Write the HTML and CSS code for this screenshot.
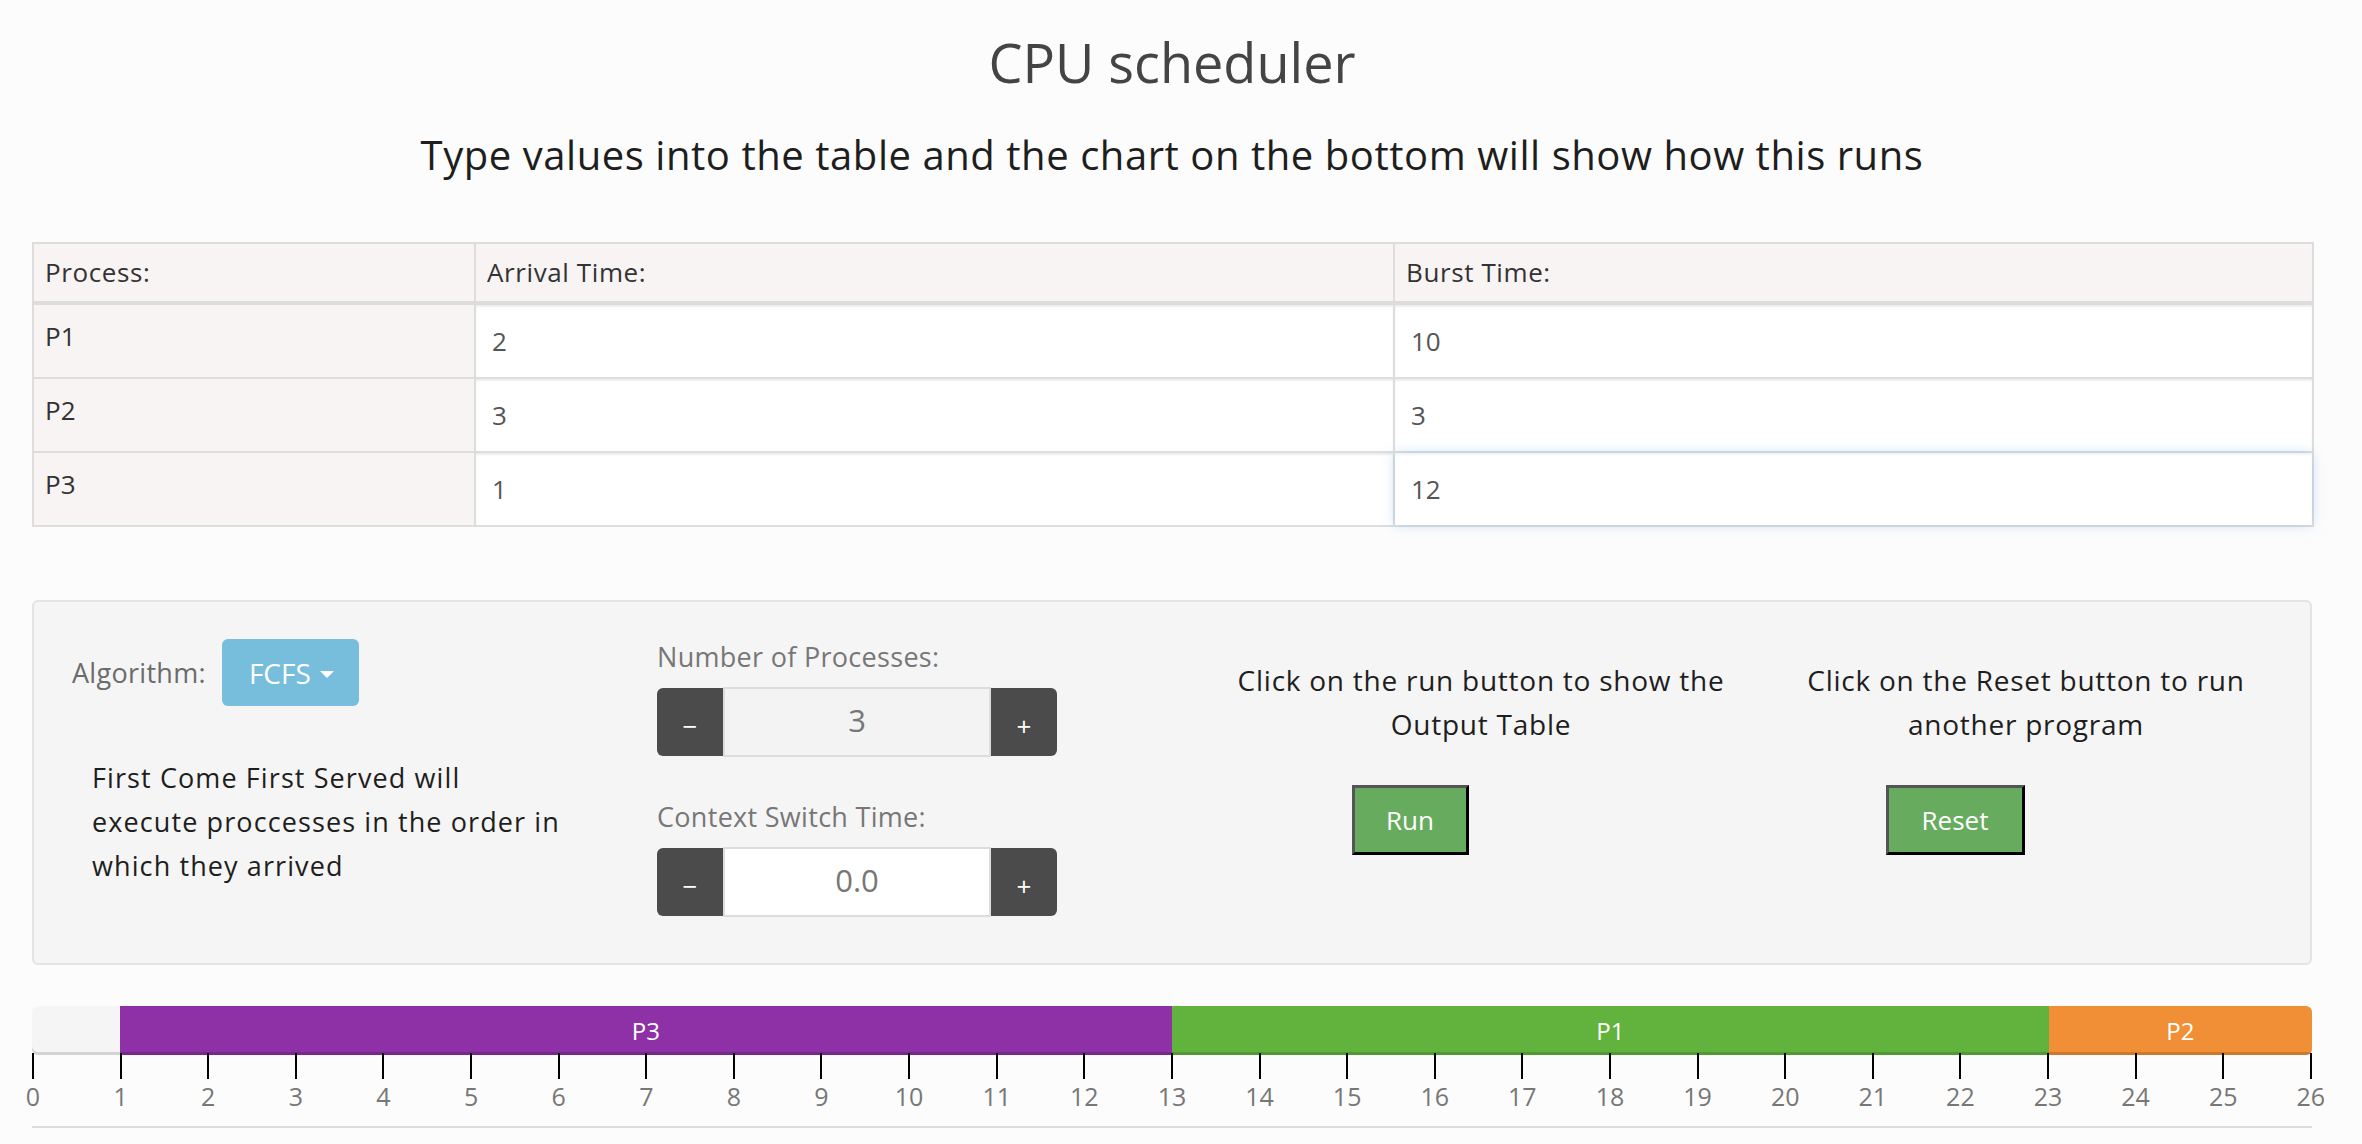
FILE: index.html
```html
<!DOCTYPE html>
<html lang="en">
<head>
<meta charset="utf-8">
<title>CPU scheduler</title>
<link rel="stylesheet" href="styles.css">
</head>
<body>
<h1 class="title">CPU scheduler</h1>
<h3 class="subtitle">Type values into the table and the chart on the bottom will show how this runs</h3>

<table class="proc-table">
  <colgroup><col class="col-proc"><col class="col-arr"><col class="col-burst"></colgroup>
  <thead>
    <tr><th>Process:</th><th>Arrival Time:</th><th>Burst Time:</th></tr>
  </thead>
  <tbody>
    <tr><td class="pname">P1</td><td class="cell"><input class="cell-input" value="2"></td><td class="cell"><input class="cell-input" value="10"></td></tr>
    <tr><td class="pname">P2</td><td class="cell"><input class="cell-input" value="3"></td><td class="cell"><input class="cell-input" value="3"></td></tr>
    <tr><td class="pname">P3</td><td class="cell"><input class="cell-input" value="1"></td><td class="cell"><input class="cell-input focused" value="12"></td></tr>
  </tbody>
</table>

<div class="panel">
  <div class="col col-algo">
    <div class="algo-row">
      <span class="label algo-label">Algorithm:</span>
      <button class="btn-algo">FCFS<span class="caret"></span></button>
    </div>
    <p class="algo-desc">First Come First Served will<br>execute proccesses in the order in<br>which they arrived</p>
  </div>
  <div class="col col-spin">
    <div class="label spin-label">Number of Processes:</div>
    <div class="spinner">
      <button class="spin-btn spin-minus">&#8722;</button>
      <input class="spin-input readonly" value="3">
      <button class="spin-btn spin-plus">+</button>
    </div>
    <div class="label spin-label second">Context Switch Time:</div>
    <div class="spinner">
      <button class="spin-btn spin-minus">&#8722;</button>
      <input class="spin-input" value="0.0">
      <button class="spin-btn spin-plus">+</button>
    </div>
  </div>
  <div class="col col-action">
    <p class="action-text">Click on the run button to show the<br>Output Table</p>
    <div class="action-btn-wrap"><button class="btn-green btn-run">Run</button></div>
  </div>
  <div class="col col-action">
    <p class="action-text">Click on the Reset button to run<br>another program</p>
    <div class="action-btn-wrap"><button class="btn-green btn-reset">Reset</button></div>
  </div>
</div>

<div class="timeline">
  <div class="bar">
    <div class="seg seg-idle" style="width: 3.846%"></div>
    <div class="seg seg-p3" style="width: 46.154%">P3</div>
    <div class="seg seg-p1" style="width: 38.462%">P1</div>
    <div class="seg seg-p2" style="width: 11.538%">P2</div>
  </div>
  <div class="ticks">
    <span class="tick"></span><span class="tick"></span><span class="tick"></span><span class="tick"></span><span class="tick"></span><span class="tick"></span><span class="tick"></span><span class="tick"></span><span class="tick"></span><span class="tick"></span><span class="tick"></span><span class="tick"></span><span class="tick"></span><span class="tick"></span><span class="tick"></span><span class="tick"></span><span class="tick"></span><span class="tick"></span><span class="tick"></span><span class="tick"></span><span class="tick"></span><span class="tick"></span><span class="tick"></span><span class="tick"></span><span class="tick"></span><span class="tick"></span><span class="tick"></span>
  </div>
  <div class="nums">
    <span class="num"><span>0</span></span><span class="num"><span>1</span></span><span class="num"><span>2</span></span><span class="num"><span>3</span></span><span class="num"><span>4</span></span><span class="num"><span>5</span></span><span class="num"><span>6</span></span><span class="num"><span>7</span></span><span class="num"><span>8</span></span><span class="num"><span>9</span></span><span class="num"><span>10</span></span><span class="num"><span>11</span></span><span class="num"><span>12</span></span><span class="num"><span>13</span></span><span class="num"><span>14</span></span><span class="num"><span>15</span></span><span class="num"><span>16</span></span><span class="num"><span>17</span></span><span class="num"><span>18</span></span><span class="num"><span>19</span></span><span class="num"><span>20</span></span><span class="num"><span>21</span></span><span class="num"><span>22</span></span><span class="num"><span>23</span></span><span class="num"><span>24</span></span><span class="num"><span>25</span></span><span class="num"><span>26</span></span>
  </div>
  <div class="baseline"></div>
</div>
</body>
</html>
```

FILE: styles.css
```css
* { box-sizing: border-box; }

html, body {
  margin: 0;
  background: #fcfcfc;
}

body {
  padding: 0 50px 0 32px;
  font-family: "Open Sans", "Noto Sans", "Liberation Sans", sans-serif;
  color: #333;
  width: 2362px;
  overflow: hidden;
}

.title {
  margin: 33px 0 0;
  font-size: 54px;
  line-height: 1.1;
  font-weight: 400;
  color: #444;
  text-align: center;
}

.subtitle {
  margin: 41px 0 0;
  font-size: 40px;
  line-height: 1.1;
  font-weight: 400;
  letter-spacing: 0.55px;
  color: #1e1e1e;
  text-align: center;
}

/* ---------- process table ---------- */
.proc-table {
  margin-top: 65px;
  width: 2280px;
  border-spacing: 0;
  border-top: 2px solid #ddd;
  border-left: 2px solid #ddd;
  table-layout: fixed;
}
.col-proc { width: 442px; }
.col-arr { width: 919px; }
.col-burst { width: 919px; }

.proc-table th,
.proc-table td {
  border-right: 2px solid #ddd;
  border-bottom: 2px solid #ddd;
  font-size: 26px;
  color: #333;
}

.proc-table th {
  text-align: left;
  font-weight: 400;
  line-height: 57px;
  padding: 0 11px;
  letter-spacing: 0.6px;
  background: #f9f4f4;
  border-bottom: 4px solid #dcdcdc;
}

.pname {
  background: #f9f4f4;
  vertical-align: top;
  padding: 12px 11px 0;
  line-height: 38px;
}

.cell {
  padding: 0;
  background: #fff;
}

.cell-input {
  display: block;
  width: 100%;
  height: 72px;
  border: 0;
  margin: 0;
  padding: 0 16px 0;
  background: #fff;
  font-family: inherit;
  font-size: 26px;
  color: #555;
  box-shadow: inset 0 2px 2px rgba(0, 0, 0, 0.07);
  outline: none;
}

.cell-input.focused {
  position: relative;
  box-shadow: inset 0 2px 2px rgba(0, 0, 0, 0.05), 0 0 12px rgba(102, 175, 233, 0.35);
}

/* ---------- control panel ---------- */
.panel {
  margin-top: 73px;
  width: 2280px;
  background: #f5f5f5;
  border: 2px solid #e4e4e4;
  border-radius: 6px;
  padding: 36px 0 47px 38px;
  display: grid;
  grid-template-columns: 585px 534px 580px 510px;
  align-items: start;
}

.label {
  font-size: 27px;
  letter-spacing: 0.3px;
  color: #777;
}

.algo-row {
  display: flex;
  align-items: center;
  gap: 16px;
  height: 67px;
  margin-top: 1px;
}

.algo-label { color: #6b6b6b; }

.btn-algo {
  display: flex;
  align-items: center;
  gap: 9px;
  height: 67px;
  width: 137px;
  padding: 0 0 0 27px;
  border: 0;
  border-radius: 6px;
  background: #77bedc;
  color: #fff;
  font-family: inherit;
  font-size: 28px;
}

.caret {
  width: 0;
  height: 0;
  border-top: 7px solid #fff;
  border-left: 7.5px solid transparent;
  border-right: 7.5px solid transparent;
  margin-top: 3px;
}

.algo-desc {
  margin: 50px 0 0;
  padding-left: 20px;
  font-size: 27px;
  line-height: 44px;
  letter-spacing: 1.1px;
  color: #1e1e1e;
}

.spin-label {
  line-height: 38px;
}
.spin-label.second { margin-top: 42px; }

.spinner {
  display: flex;
  margin-top: 12px;
  width: 400px;
  height: 68px;
}

.spin-btn {
  width: 66px;
  height: 68px;
  border: 0;
  background: #4a4b4a;
  color: #fff;
  font-family: "Open Sans", sans-serif;
  font-size: 26px;
  line-height: 1;
  padding: 8px 0 0;
}
.spin-minus { border-radius: 6px 0 0 6px; }
.spin-plus { border-radius: 0 6px 6px 0; }

.spin-input {
  width: 268px;
  height: 70px;
  margin-top: -1px;
  border: 2px solid #ddd;
  background: #fff;
  text-align: center;
  font-family: inherit;
  font-size: 31px;
  color: #777;
  padding: 0 0 4px;
  outline: none;
}
.spin-input.readonly { background: #f3f3f3; }

.col-action {
  text-align: center;
}

.action-text {
  margin: 20px 0 0;
  font-size: 28px;
  line-height: 44px;
  letter-spacing: 0.75px;
  color: #1e1e1e;
}

.action-btn-wrap {
  margin-top: 39px;
  padding-right: 142px;
  display: flex;
  justify-content: center;
}

.btn-green {
  height: 70px;
  border: 3px solid;
  border-color: #555 #000 #000 #555;
  background: #67ac5e;
  color: #fff;
  font-family: inherit;
  font-size: 26px;
  padding: 0;
}
.btn-run { width: 117px; }
.btn-reset { width: 139px; }

/* ---------- timeline ---------- */
.timeline {
  margin-top: 41px;
  width: 2280px;
}

.bar {
  display: flex;
  height: 49px;
  border-radius: 6px;
  overflow: hidden;
  background: #f5f5f5;
  box-shadow: inset 0 -3px 0 #d3d3d3;
}

.seg {
  height: 100%;
  display: flex;
  align-items: center;
  justify-content: center;
  color: #fff;
  font-size: 24px;
  box-shadow: inset 0 -3px 0 rgba(0, 0, 0, 0.15);
}
.seg-idle { background: transparent; box-shadow: none; }
.seg-p3 { background: #8e30a6; }
.seg-p1 { background: #62b33e; }
.seg-p2 { background: #f08f35; }

.ticks {
  display: flex;
  justify-content: space-between;
  height: 26px;
  margin-top: -2px;
}
.tick {
  width: 2px;
  height: 26px;
  background: #000;
}

.nums {
  display: flex;
  justify-content: space-between;
  margin-top: 2px;
}
.num {
  width: 2px;
  display: flex;
  justify-content: center;
  font-size: 25px;
  line-height: 30px;
  color: #777;
  white-space: nowrap;
}

.baseline {
  margin-top: 15px;
  height: 2px;
  background: #ddd;
}
```
